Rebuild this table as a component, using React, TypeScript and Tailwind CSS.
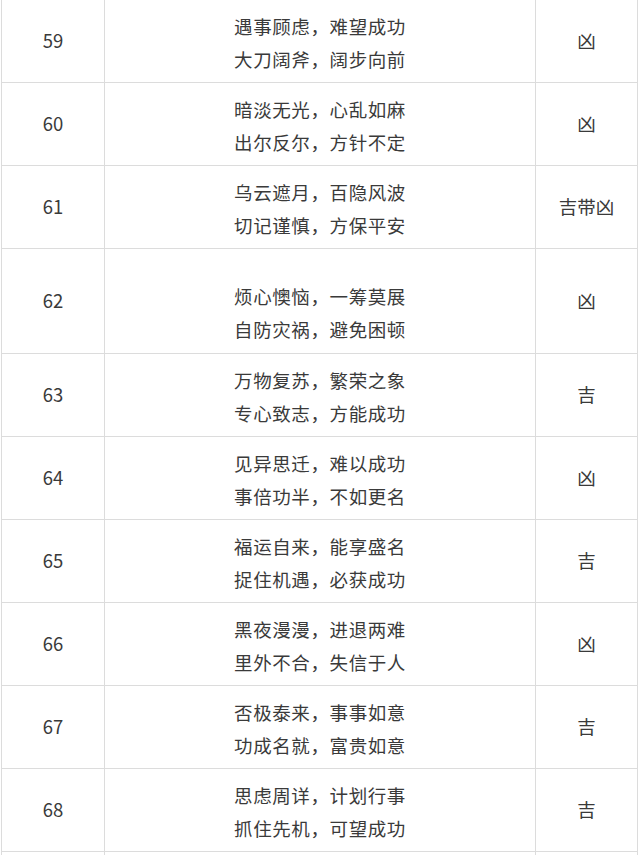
const ROWS = [
  { n: 59, a: "遇事顾虑，难望成功", b: "大刀阔斧，阔步向前", r: "凶" },
  { n: 60, a: "暗淡无光，心乱如麻", b: "出尔反尔，方针不定", r: "凶" },
  { n: 61, a: "乌云遮月，百隐风波", b: "切记谨慎，方保平安", r: "吉带凶" },
  { n: 62, a: "烦心懊恼，一筹莫展", b: "自防灾祸，避免困顿", r: "凶", tall: true },
  { n: 63, a: "万物复苏，繁荣之象", b: "专心致志，方能成功", r: "吉" },
  { n: 64, a: "见异思迁，难以成功", b: "事倍功半，不如更名", r: "凶" },
  { n: 65, a: "福运自来，能享盛名", b: "捉住机遇，必获成功", r: "吉" },
  { n: 66, a: "黑夜漫漫，进退两难", b: "里外不合，失信于人", r: "凶" },
  { n: 67, a: "否极泰来，事事如意", b: "功成名就，富贵如意", r: "吉" },
  { n: 68, a: "思虑周详，计划行事", b: "抓住先机，可望成功", r: "吉" },
];

export default function App() {
  return (
    <div
      className="h-[855px] overflow-hidden bg-white text-[#3a3a3a] text-[18.5px]"
      style={{ fontFamily: '"Noto Sans CJK SC", "Microsoft YaHei", sans-serif' }}
    >
      <div className="ml-[1px] w-[637px]">
        {ROWS.map((row) => (
          <div key={row.n} className="flex border-b border-l border-[#dcdcdc]">
            <div className="w-[103px] border-r border-[#dcdcdc] flex items-center justify-center">
              {row.n}
            </div>
            <div
              className={
                "w-[431px] border-r border-[#dcdcdc] flex flex-col items-center leading-[33px] " +
                (row.tall ? "h-[104px] pt-[31px]" : "h-[82px] pt-[10px]")
              }
            >
              <p className="tracking-[0.6px]">{row.a}</p>
              <p className="tracking-[0.6px]">{row.b}</p>
            </div>
            <div className="w-[102px] border-r border-[#dcdcdc] flex items-center justify-center">
              {row.r}
            </div>
          </div>
        ))}
        {/* next row, only its top edge shows */}
        <div className="flex h-[10px] border-l border-[#dcdcdc]">
          <div className="w-[103px] border-r border-[#dcdcdc]" />
          <div className="w-[431px] border-r border-[#dcdcdc]" />
          <div className="w-[102px] border-r border-[#dcdcdc]" />
        </div>
      </div>
    </div>
  );
}
